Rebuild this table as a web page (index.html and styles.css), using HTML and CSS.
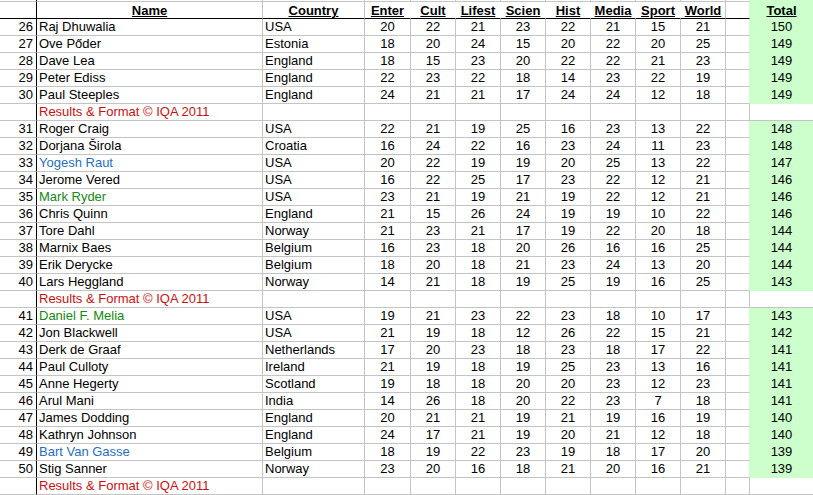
FILE: index.html
```html
<!DOCTYPE html>
<html>
<head>
<meta charset="utf-8">
<link rel="stylesheet" href="styles.css">
</head>
<body>
<div class="sheet" id="sheet">
  <div class="row strip">
    <div class="c num"></div><div class="c"></div><div class="c"></div><div class="c"></div><div class="c"></div><div class="c"></div><div class="c"></div><div class="c"></div><div class="c"></div><div class="c"></div><div class="c"></div><div class="c gap"></div><div class="c tot"></div>
  </div>
  <div class="row head">
    <div class="c num"></div>
    <div class="c ctr name-h"><span>Name</span></div>
    <div class="c ctr country-h"><span>Country</span></div>
    <div class="c ctr nb"><span>Enter</span></div>
    <div class="c ctr nb"><span>Cult</span></div>
    <div class="c ctr nb"><span>Lifest</span></div>
    <div class="c ctr nb"><span>Scien</span></div>
    <div class="c ctr nb"><span>Hist</span></div>
    <div class="c ctr nb"><span>Media</span></div>
    <div class="c ctr nb"><span>Sport</span></div>
    <div class="c ctr"><span>World</span></div>
    <div class="c gap"></div>
    <div class="c ctr tot"><span>Total</span></div>
  </div>
</div>
<script src="app.js"></script>
</body>
</html>
```
FILE: app.js
```js
const rows = [
  [26,"Raj Dhuwalia","USA",[20,22,21,23,22,21,15,21],150,""],
  [27,"Ove Pőder","Estonia",[18,20,24,15,20,22,20,25],149,""],
  [28,"Dave Lea","England",[18,15,23,20,22,22,21,23],149,""],
  [29,"Peter Ediss","England",[22,23,22,18,14,23,22,19],149,""],
  [30,"Paul Steeples","England",[24,21,21,17,24,24,12,18],149,""],
  "R",
  [31,"Roger Craig","USA",[22,21,19,25,16,23,13,22],148,""],
  [32,"Dorjana Širola","Croatia",[16,24,22,16,23,24,11,23],148,""],
  [33,"Yogesh Raut","USA",[20,22,19,19,20,25,13,22],147,"blue"],
  [34,"Jerome Vered","USA",[16,22,25,17,23,22,12,21],146,""],
  [35,"Mark Ryder","USA",[23,21,19,21,19,22,12,21],146,"green"],
  [36,"Chris Quinn","England",[21,15,26,24,19,19,10,22],146,""],
  [37,"Tore Dahl","Norway",[21,23,21,17,19,22,20,18],144,""],
  [38,"Marnix Baes","Belgium",[16,23,18,20,26,16,16,25],144,""],
  [39,"Erik Derycke","Belgium",[18,20,18,21,23,24,13,20],144,""],
  [40,"Lars Heggland","Norway",[14,21,18,19,25,19,16,25],143,""],
  "R",
  [41,"Daniel F. Melia","USA",[19,21,23,22,23,18,10,17],143,"green"],
  [42,"Jon Blackwell","USA",[21,19,18,12,26,22,15,21],142,""],
  [43,"Derk de Graaf","Netherlands",[17,20,23,18,23,18,17,22],141,""],
  [44,"Paul Culloty","Ireland",[21,19,18,19,25,23,13,16],141,""],
  [45,"Anne Hegerty","Scotland",[19,18,18,20,20,23,12,23],141,""],
  [46,"Arul Mani","India",[14,26,18,20,22,23,7,18],141,""],
  [47,"James Dodding","England",[20,21,21,19,21,19,16,19],140,""],
  [48,"Kathryn Johnson","England",[24,17,21,19,20,21,12,18],140,""],
  [49,"Bart Van Gasse","Belgium",[18,19,22,23,19,18,17,20],139,"blue"],
  [50,"Stig Sanner","Norway",[23,20,16,18,21,20,16,21],139,""],
  "R"
];
const sheet = document.getElementById("sheet");
function cell(cls, text) {
  const d = document.createElement("div");
  d.className = "c " + cls;
  if (text !== undefined) d.textContent = text;
  return d;
}
rows.forEach(r => {
  const row = document.createElement("div");
  if (r === "R") {
    row.className = "row data results";
    row.appendChild(cell("num"));
    row.appendChild(cell("name red", "Results & Format \u00A9 IQA 2011"));
    row.appendChild(cell("country"));
    for (let i = 0; i < 8; i++) row.appendChild(cell("ctr"));
    row.appendChild(cell("gap"));
    row.appendChild(cell("tot white"));
  } else {
    row.className = "row data";
    row.appendChild(cell("num", r[0]));
    row.appendChild(cell("name " + r[5], r[1]));
    row.appendChild(cell("country", r[2]));
    r[3].forEach(v => row.appendChild(cell("ctr", v)));
    row.appendChild(cell("gap"));
    row.appendChild(cell("ctr tot", r[4]));
  }
  sheet.appendChild(row);
});
```
FILE: styles.css
```css
html, body {
  margin: 0;
  padding: 0;
  background: #ffffff;
}
body {
  width: 813px;
  height: 495px;
  overflow: hidden;
  font-family: "Liberation Sans", Arial, sans-serif;
  font-size: 13px;
  color: #000;
}
.sheet {
  width: 813px;
}
.row {
  display: grid;
  grid-template-columns: 37px 226px 102px 46px repeat(7, 45px) 24px 63px;
}
.c {
  box-sizing: border-box;
  border-right: 1px solid #c4c4c4;
  border-bottom: 1px solid #c4c4c4;
  white-space: nowrap;
  overflow: visible;
}
.c.num {
  border-right-color: #000;
  text-align: right;
  padding-right: 3px;
}
.c.gap {
  border-right-color: #ccffcc;
}
.c.tot {
  background: #ccffcc;
  border-right: none;
  border-bottom-color: #ccffcc;
}
.c.tot.white {
  background: #fff;
  border-bottom-color: #c4c4c4;
}
.results .c.gap {
  border-right-color: #c4c4c4;
}
.strip .c {
  height: 2px;
}
.head .c {
  height: 17px;
  border-bottom-color: #000;
  font-weight: bold;
  line-height: 15px;
  padding-top: 1px;
}
.head .c.nb {
  border-right-color: transparent;
}
.head .c.tot {
  border-bottom-color: #ccffcc;
}
.head span {
  text-decoration: underline;
}
.data .c {
  height: 17px;
  line-height: 16px;
}
.ctr {
  text-align: center;
}
.name, .country {
  padding-left: 2px;
  overflow: visible;
}
.red { color: #cc1010; }
.green { color: #138a13; }
.blue { color: #1f6fbf; }
```
